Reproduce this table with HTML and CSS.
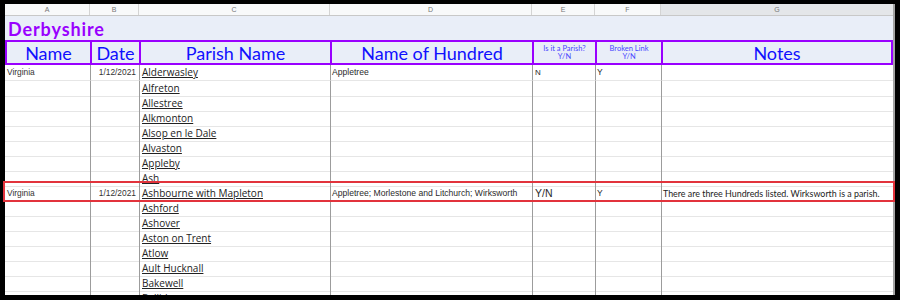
FILE: index.html
```html
<!DOCTYPE html>
<html>
<head>
<meta charset="utf-8">
<link rel="stylesheet" href="styles.css">
</head>
<body>
<div class="sheet">
  <div class="row colhead">
    <div>A</div><div>B</div><div>C</div><div>D</div><div>E</div><div>F</div><div class="sel">G</div>
  </div>
  <div class="title">Derbyshire</div>
  <div class="row header">
    <div class="h">Name</div>
    <div class="h">Date</div>
    <div class="h">Parish Name</div>
    <div class="h">Name of Hundred</div>
    <div class="h small">Is it a Parish?<br>Y/N</div>
    <div class="h small">Broken Link<br>Y/N</div>
    <div class="h last">Notes</div>
  </div>
  <div class="row data first">
    <div class="c name">Virginia</div><div class="c date">1/12/2021</div><div class="c parish"><span>Alderwasley</span></div><div class="c hund">Appletree</div><div class="c yn">N</div><div class="c bl">Y</div><div class="c notes"></div>
  </div>
  <div class="row data"><div class="c"></div><div class="c"></div><div class="c parish"><span>Alfreton</span></div><div class="c"></div><div class="c"></div><div class="c"></div><div class="c"></div></div>
  <div class="row data"><div class="c"></div><div class="c"></div><div class="c parish"><span>Allestree</span></div><div class="c"></div><div class="c"></div><div class="c"></div><div class="c"></div></div>
  <div class="row data"><div class="c"></div><div class="c"></div><div class="c parish"><span>Alkmonton</span></div><div class="c"></div><div class="c"></div><div class="c"></div><div class="c"></div></div>
  <div class="row data"><div class="c"></div><div class="c"></div><div class="c parish"><span>Alsop en le Dale</span></div><div class="c"></div><div class="c"></div><div class="c"></div><div class="c"></div></div>
  <div class="row data"><div class="c"></div><div class="c"></div><div class="c parish"><span>Alvaston</span></div><div class="c"></div><div class="c"></div><div class="c"></div><div class="c"></div></div>
  <div class="row data"><div class="c"></div><div class="c"></div><div class="c parish"><span>Appleby</span></div><div class="c"></div><div class="c"></div><div class="c"></div><div class="c"></div></div>
  <div class="row data"><div class="c"></div><div class="c"></div><div class="c parish"><span>Ash</span></div><div class="c"></div><div class="c"></div><div class="c"></div><div class="c"></div></div>
  <div class="row data">
    <div class="c name">Virginia</div><div class="c date">1/12/2021</div><div class="c parish"><span>Ashbourne with Mapleton</span></div><div class="c hund">Appletree; Morlestone and Litchurch; Wirksworth</div><div class="c yn big">Y/N</div><div class="c bl">Y</div><div class="c notes">There are three Hundreds listed. Wirksworth is a parish.</div>
  </div>
  <div class="row data"><div class="c"></div><div class="c"></div><div class="c parish"><span>Ashford</span></div><div class="c"></div><div class="c"></div><div class="c"></div><div class="c"></div></div>
  <div class="row data"><div class="c"></div><div class="c"></div><div class="c parish"><span>Ashover</span></div><div class="c"></div><div class="c"></div><div class="c"></div><div class="c"></div></div>
  <div class="row data"><div class="c"></div><div class="c"></div><div class="c parish"><span>Aston on Trent</span></div><div class="c"></div><div class="c"></div><div class="c"></div><div class="c"></div></div>
  <div class="row data"><div class="c"></div><div class="c"></div><div class="c parish"><span>Atlow</span></div><div class="c"></div><div class="c"></div><div class="c"></div><div class="c"></div></div>
  <div class="row data"><div class="c"></div><div class="c"></div><div class="c parish"><span>Ault Hucknall</span></div><div class="c"></div><div class="c"></div><div class="c"></div><div class="c"></div></div>
  <div class="row data"><div class="c"></div><div class="c"></div><div class="c parish"><span>Bakewell</span></div><div class="c"></div><div class="c"></div><div class="c"></div><div class="c"></div></div>
  <div class="row data"><div class="c"></div><div class="c"></div><div class="c parish"><span>Ballidon</span></div><div class="c"></div><div class="c"></div><div class="c"></div><div class="c"></div></div>
</div>
<div class="highlight"></div>
</body>
</html>
```
FILE: styles.css
```css
* { box-sizing: border-box; }
html, body { margin: 0; padding: 0; }
body {
  background: #000;
  width: 900px;
  height: 300px;
  overflow: hidden;
  position: relative;
  padding: 4px 0 0 5px;
}
.sheet {
  width: 890px;
  height: 291px;
  overflow: hidden;
  background: #fff;
  border-right: 2px solid #a3a3a3;
}
.row {
  display: grid;
  grid-template-columns: 85px 49px 191px 202px 63px 66px 232px;
}
.colhead {
  height: 12px;
  background: #f8f9fa;
  border-bottom: 1px solid #c8c8c8;
}
.colhead div {
  font-family: "Liberation Sans", Arial, sans-serif;
  font-size: 7px;
  color: #777;
  text-align: center;
  line-height: 11px;
  border-right: 1px solid #d4d4d4;
}
.colhead .sel { background: #e4e6e9; border-right: none; }
.title {
  height: 24px;
  background: #e9eef8;
  font-family: "Lato", sans-serif;
  font-weight: 700;
  font-size: 18px;
  letter-spacing: 0.9px;
  color: #9900ff;
  padding: 2px 0 0 3px;
  line-height: 22px;
}
.header { height: 25px; background: #e9eef8; }
.h {
  border: 2px solid #9900ff;
  border-right: none;
  font-family: "Lato", sans-serif;
  font-size: 18px;
  color: #1010ff;
  display: flex;
  align-items: center;
  justify-content: center;
  text-align: center;
  line-height: 1;
}
.h.last { border-right: 2px solid #9900ff; }
.h.small {
  font-size: 7.5px;
  line-height: 8px;
  color: #4848ff;
  padding-top: 1px;
}
.data { height: 15px; }
.data.first { height: 16px; }
.c {
  border-bottom: 1px solid #e6e6e6;
  border-left: 1px solid #9c9c9c;
  display: flex;
  align-items: center;
  padding-bottom: 1px;
  white-space: nowrap;
  overflow: visible;
  color: #2a2a2a;
  font-family: "Liberation Sans", Arial, sans-serif;
  font-size: 8.5px;
}
.c:first-child { border-left: none; }
.name { padding-left: 2px; font-size: 8.4px; color: #333; }
.date { justify-content: flex-end; padding-right: 3px; font-size: 8.4px; color: #333; }
.parish {
  padding-left: 2px;
  font-family: "Open Sans", sans-serif;
  font-size: 10px;
  color: #222;
}
.parish span { text-decoration: underline; text-underline-offset: 1px; }
.hund { padding-left: 1px; font-size: 8.6px; }
.yn { padding-left: 2px; font-size: 8px; }
.yn.big { font-size: 10.5px; }
.bl { padding-left: 1px; font-size: 8.5px; }
.notes {
  padding-left: 1px;
  font-family: "Lato", sans-serif;
  font-size: 8.9px;
  color: #222;
}
.highlight {
  position: absolute;
  left: 3px;
  top: 181px;
  width: 892px;
  height: 21px;
  border: 2px solid #e2333c;
}
```
